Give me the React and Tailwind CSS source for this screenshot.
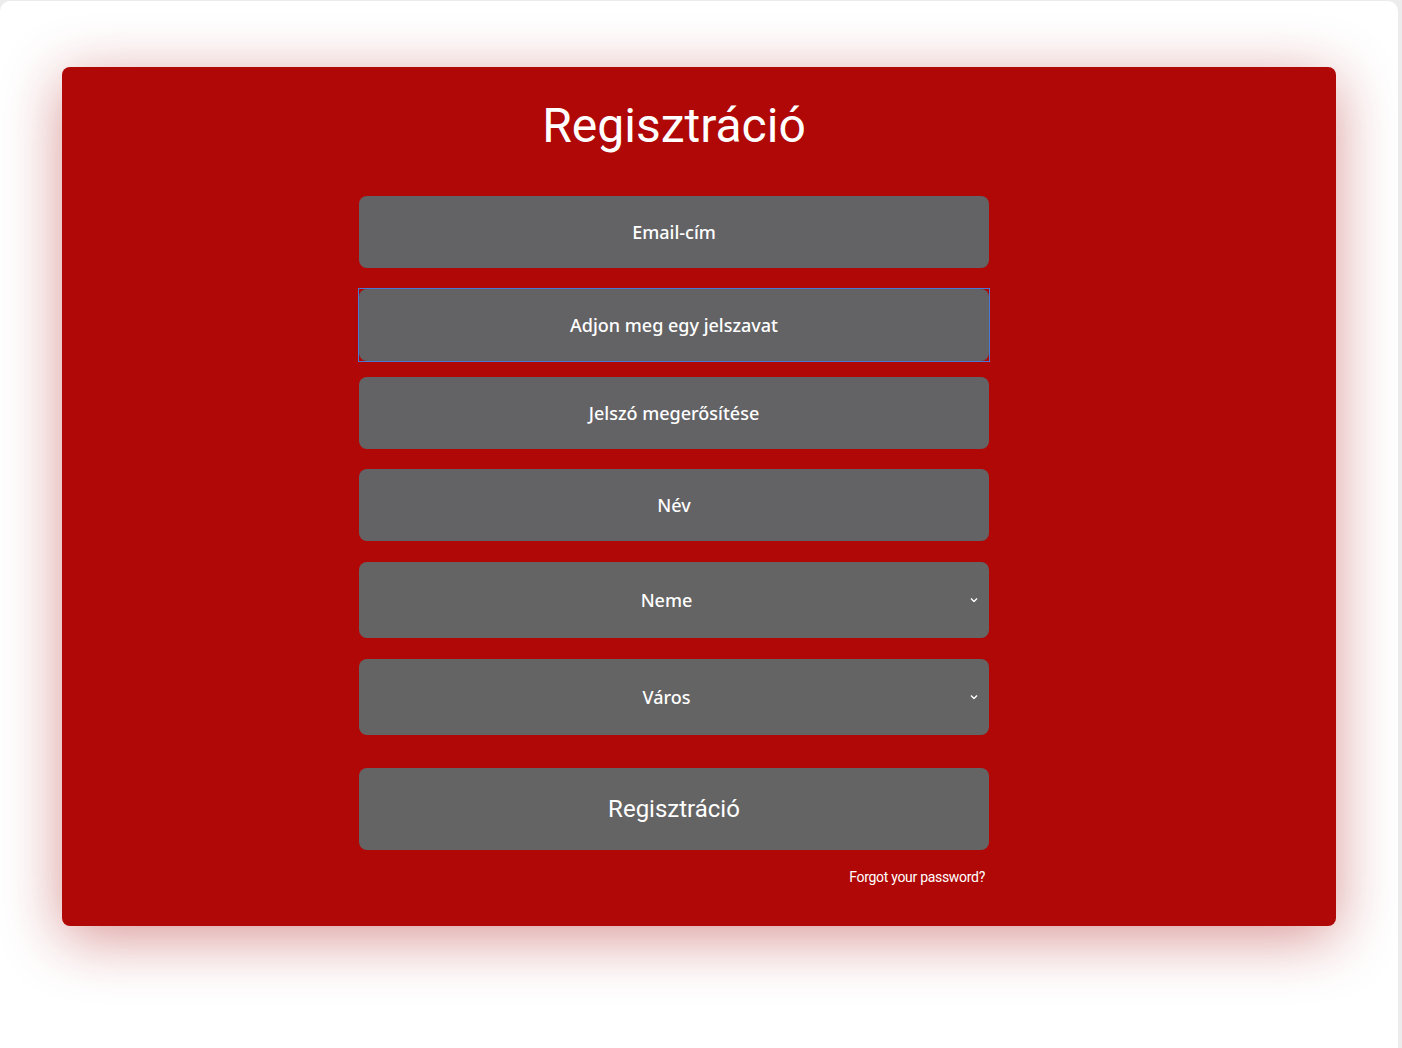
import React from "react";

function Chevron() {
  return (
    <svg className="pointer-events-none absolute right-[11px] top-1/2 -translate-y-1/2" width="8" height="5" viewBox="0 0 8 5" fill="none">
      <path d="M1 1l3 3 3-3" stroke="white" strokeWidth="1.4" />
    </svg>
  );
}

export default function App() {
  const inputCls =
    "block w-full h-[72px] rounded-lg bg-[#636366] text-center text-white text-[18px] font-medium placeholder:text-white outline-none border-0 font-['Noto_Sans',sans-serif]";
  const selectCls =
    "block w-full h-[76px] rounded-lg bg-[#646464] text-white text-[18px] font-medium appearance-none text-center pr-[15px] outline-none font-['Noto_Sans',sans-serif]";
  return (
    <div className="min-h-[1048px] bg-[#ececec] pt-px pr-[4px]">
      <div className="min-h-[1047px] bg-white rounded-t-[10px] pt-[66px] px-[62px] pb-[120px]">
        <div className="rounded-lg bg-[#b00806] shadow-[0_12px_60px_rgba(170,20,20,0.45)] pt-[30px] pb-[38px] pr-[50px]">
          <h1 className="text-center text-white text-[48px] leading-[58px] font-['Roboto',sans-serif]">
            Regisztráció
          </h1>
          <form className="w-[630px] mx-auto mt-[41px] flex flex-col">
            <input className={inputCls} placeholder="Email-cím" />
            <div className="mt-[20px] border border-[#4a78d6] -mx-px">
              <input className={inputCls + " h-[71px]"} type="password" placeholder="Adjon meg egy jelszavat" />
            </div>
            <input className={inputCls + " mt-[15px]"} type="password" placeholder="Jelszó megerősítése" />
            <input className={inputCls + " mt-[20px]"} placeholder="Név" />
            <div className="relative mt-[21px]">
              <select className={selectCls}>
                <option>Neme</option>
              </select>
              <Chevron />
            </div>
            <div className="relative mt-[21px]">
              <select className={selectCls}>
                <option>Város</option>
              </select>
              <Chevron />
            </div>
            <button type="button" className="mt-[33px] h-[82px] w-full rounded-lg bg-[#646464] text-white text-[24px] font-['Roboto',sans-serif]">
              Regisztráció
            </button>
            <div className="mt-[14px] pr-[4px] text-right">
              <a className="text-white text-[14px] tracking-[-0.3px] font-['Roboto',sans-serif] cursor-pointer">
                Forgot your password?
              </a>
            </div>
          </form>
        </div>
      </div>
    </div>
  );
}
